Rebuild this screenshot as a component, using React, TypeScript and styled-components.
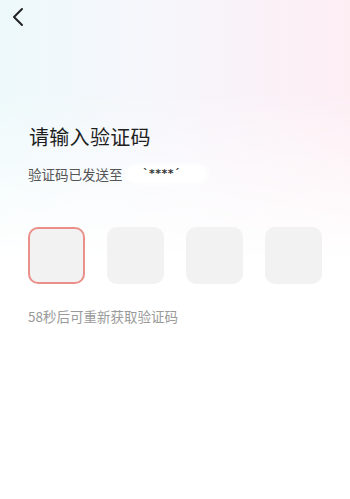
import React from 'react';
import styled, { createGlobalStyle } from 'styled-components';

const GlobalStyle = createGlobalStyle`
	html, body {
		margin: 0;
		padding: 0;
		background: #fff;
	}
	body {
		font-family: "Noto Sans CJK SC", "Noto Sans", sans-serif;
	}
`;

const Page = styled.div`
	position: relative;
	width: 350px;
	height: 499px;
	overflow: hidden;
	background: #fff;
`;

const Glow = styled.div`
	position: absolute;
	left: 0;
	top: 0;
	right: 0;
	height: 260px;
	background: linear-gradient(90deg, #edf9fb 0%, #f6f6fb 45%, #fdeef4 100%);
	-webkit-mask-image: linear-gradient(180deg, #000 0%, #000 35%, transparent 100%);
	mask-image: linear-gradient(180deg, #000 0%, #000 35%, transparent 100%);
`;

const Content = styled.div`
	position: relative;
	display: flex;
	flex-direction: column;
	padding: 0 28px;
`;

const TopBar = styled.div`
	height: 34px;
	display: flex;
	align-items: center;
	margin-left: -22px;
`;

const BackButton = styled.button`
	border: 0;
	background: none;
	padding: 0;
	width: 24px;
	height: 28px;
	display: flex;
	align-items: center;
	justify-content: center;
	cursor: pointer;
`;

const Title = styled.h1`
	margin: 88px 0 0 1px;
	font-size: 20px;
	line-height: 30px;
	font-weight: 400;
	color: #1f1f1f;
	letter-spacing: 0.3px;
`;

const SentRow = styled.div`
	margin-top: 12px;
	display: flex;
	align-items: center;
	font-size: 13.5px;
	line-height: 20px;
	color: #555;
`;

const Phone = styled.span`
	margin-left: 5px;
	width: 78px;
	height: 16px;
	border-radius: 8px;
	background: #fff;
	box-shadow: 0 0 4px 2px #fff;
	display: flex;
	align-items: center;
	justify-content: center;
	font-family: "DejaVu Sans", sans-serif;
	font-size: 11px;
	font-weight: 700;
	letter-spacing: 0.5px;
	color: #333;
	padding-right: 10px;
	box-sizing: border-box;
`;

const CodeRow = styled.div`
	margin-top: 43px;
	display: flex;
	justify-content: space-between;
	width: 294px;
`;

const CodeBox = styled.div<{ $active?: boolean }>`
	width: 57px;
	height: 57px;
	box-sizing: border-box;
	border-radius: 10px;
	background: #f2f2f2;
	border: 2px solid ${p => (p.$active ? '#eb8f8a' : '#f2f2f2')};
`;

const Countdown = styled.div`
	margin-top: 22px;
	font-size: 13.5px;
	line-height: 20px;
	color: #9a9a9a;
`;

export default function App() {
	return (
		<Page>
			<GlobalStyle />
			<Glow />
			<Content>
				<TopBar>
					<BackButton aria-label="back">
						<svg width="14" height="20" viewBox="0 0 14 20" fill="none">
							<path d="M11 2 L3 10 L11 18" stroke="#222" strokeWidth="2" strokeLinecap="round" strokeLinejoin="round" />
						</svg>
					</BackButton>
				</TopBar>
				<Title>请输入验证码</Title>
				<SentRow>
					验证码已发送至
					<Phone>ˋ****ˊ</Phone>
				</SentRow>
				<CodeRow>
					<CodeBox $active />
					<CodeBox />
					<CodeBox />
					<CodeBox />
				</CodeRow>
				<Countdown>58秒后可重新获取验证码</Countdown>
			</Content>
		</Page>
	);
}
